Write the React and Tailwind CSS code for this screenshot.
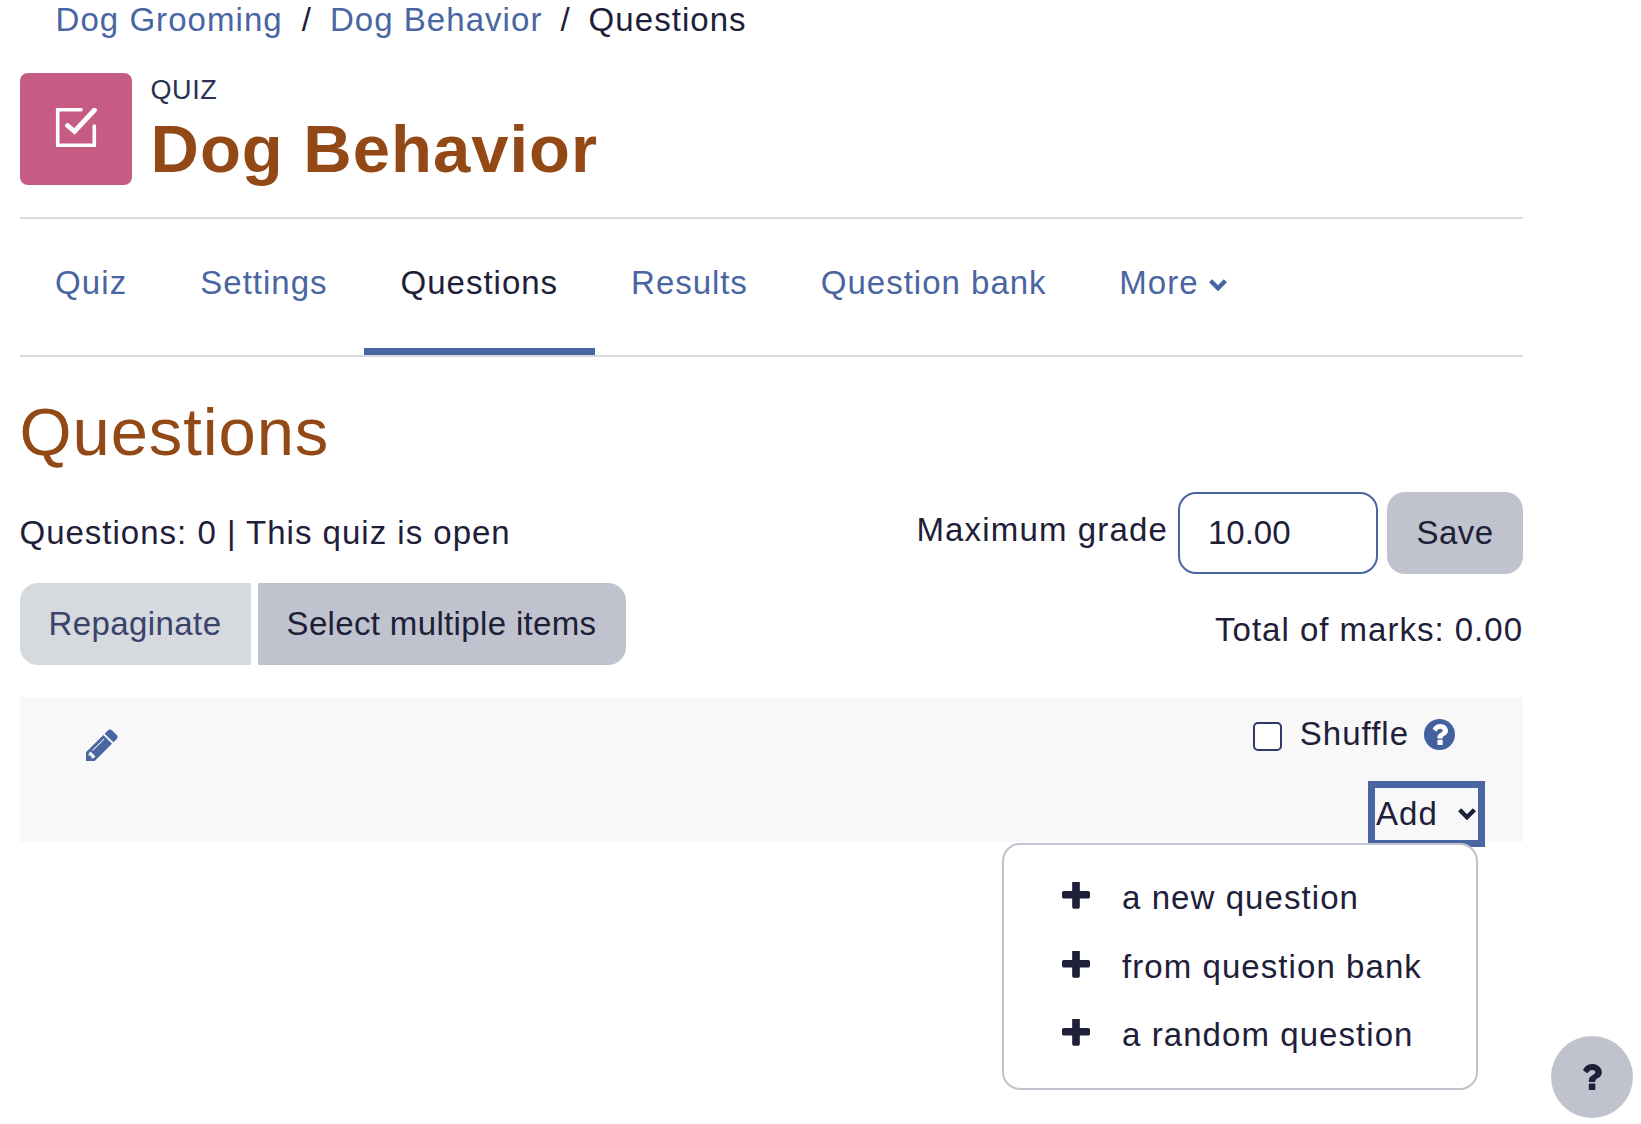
const PLUS =
  "M1600 736v192q0 40-28 68t-68 28h-416v416q0 40-28 68t-68 28h-192q-40 0-68-28t-28-68v-416h-416q-40 0-68-28t-28-68v-192q0-40 28-68t68-28h416v-416q0-40 28-68t68-28h192q40 0 68 28t28 68v416h416q40 0 68 28t28 68z";
const PENCIL =
  "M491 1536l91-91-235-235-91 91v107h128v128h107zm523-928q0-22-22-22-10 0-17 7l-542 542q-7 7-7 17 0 22 22 22 10 0 17-7l542-542q7-7 7-17zm-54-192l416 416-832 832h-416v-416zm683 96q0 53-37 90l-166 166-416-416 166-165q36-38 90-38 53 0 91 38l235 234q37 39 37 91z";
const QUESTION =
  "M1024 1376v-192q0-14-9-23t-23-9h-192q-14 0-23 9t-9 23v192q0 14 9 23t23 9h192q14 0 23-9t9-23zm256-672q0-88-55.5-163t-138.5-116-170-41q-243 0-371 213-15 24 8 42l132 100q7 6 19 6 16 0 25-12 53-68 86-92 34-24 86-24 48 0 85.5 26t37.5 59q0 38-20 61t-68 45q-63 28-115.5 86.5t-52.5 125.5v36q0 14 9 23t23 9h192q14 0 23-9t9-23q0-19 21.5-49.5t54.5-49.5q32-18 49-28.5t46-35 44.5-48 28-60.5 12.5-81z";

function Chevron({ className }) {
  return (
    <svg viewBox="0 0 18 12" className={className} fill="none" stroke="currentColor" strokeWidth="4.4">
      <path d="M1.6 1.8 L9 9.2 L16.4 1.8" />
    </svg>
  );
}

function MenuItem({ children }) {
  return (
    <li className="flex h-[68.6px] items-center">
      <svg viewBox="192 192 1408 1408" className="mb-1 h-7 w-7 shrink-0" fill="currentColor">
        <path d={PLUS} />
      </svg>
      <span className="ml-[32px] tracking-[1.07px]">{children}</span>
    </li>
  );
}

export default function App() {
  return (
    <div className="relative h-[1124px] w-full overflow-hidden bg-white pl-[19.5px] font-['Liberation_Sans',Arial,sans-serif] text-[33px] leading-[40px] whitespace-nowrap text-[#1d2038]">
      <div className="w-[1503.5px]">
        <nav className="flex h-[40px] pl-[36px] text-[#4965a2]">
          <a className="tracking-[1.05px]">Dog Grooming</a>
          <span className="mx-[19px] text-[#1d2038]">/</span>
          <a className="tracking-[1.05px]">Dog Behavior</a>
          <span className="mr-[19px] ml-[18px] text-[#1d2038]">/</span>
          <span className="tracking-[1.05px] text-[#1d2038]">Questions</span>
        </nav>

        <header className="mt-[33px] flex h-[146px] border-b-2 border-[#d7dade]">
          <div className="flex h-[112px] w-[112.5px] items-center justify-center rounded-lg bg-[#c65b84]">
            <svg viewBox="0 0 42 42" className="h-[42px] w-[42px]" fill="none" stroke="white" strokeWidth="3.6" strokeLinecap="round">
              <path d="M26 1.7H2.7V37.300H39.300V18" />
              <path d="M12.500 17.500L19.500 23.500L39.500 2" strokeWidth="4.8" />
            </svg>
          </div>
          <div className="ml-[18.5px] pt-[1px]">
            <div className="h-[32px] text-[27px] leading-[32px] tracking-[0.6px] text-[#2b3152]">QUIZ</div>
            <h1 className="mt-[3px] text-[67px] leading-[80px] font-bold tracking-[1px] text-[#924916]">Dog Behavior</h1>
          </div>
        </header>

        <nav className="-ml-px flex h-[136px] text-[#4965a2]">
          <a className="px-[36.5px] pt-[44px] tracking-[1.1px]">Quiz</a>
          <a className="px-[36.5px] pt-[44px] tracking-[1px]">Settings</a>
          <a className="border-b-[7px] border-[#4965a2] px-[36.5px] pt-[44px] tracking-[1px] text-[#1d2038]">Questions</a>
          <a className="px-[36.5px] pt-[44px] tracking-[0.95px]">Results</a>
          <a className="px-[36.5px] pt-[44px] tracking-[1px]">Question bank</a>
          <a className="flex px-[36px] pt-[44px] tracking-[1.1px]">
            More
            <Chevron className="mt-[16px] ml-[10px] h-3 w-[18px]" />
          </a>
        </nav>
        <hr className="border-t-2 border-[#d7dade]" />

        <h2 className="mt-[35px] h-[80px] text-[67px] leading-[80px] tracking-[0.9px] text-[#924916]">Questions</h2>

        <section className="mt-[20px] flex justify-between">
          <div>
            <div className="mt-[21px] tracking-[1px]">Questions: 0 | This quiz is open</div>
            <div className="mt-[30px] flex gap-[7px]">
              <button className="h-[82px] w-[231px] rounded-l-[18px] bg-[#d6d9de] text-[#39436b]">
                <span className="tracking-[0.4px]">Repaginate</span>
              </button>
              <button className="h-[82px] w-[368px] rounded-r-[18px] bg-[#c0c3cd]">
                <span className="tracking-[0.35px]">Select multiple items</span>
              </button>
            </div>
          </div>
          <div className="flex flex-col items-end">
            <div className="flex">
              <label className="mt-[18px] mr-[10px] tracking-[1.15px]">Maximum grade</label>
              <div className="flex h-[82px] w-[200px] items-center rounded-[18px] border-2 border-[#4965a2] pb-px pl-[28px]">10.00</div>
              <button className="ml-[9px] h-[82px] w-[136px] rounded-[18px] bg-[#c0c3cd]">
                <span className="tracking-[0.5px]">Save</span>
              </button>
            </div>
            <div className="mt-[36px] tracking-[1px]">Total of marks: 0.00</div>
          </div>
        </section>

        <section className="mt-[32px] flex h-[145px] justify-between bg-[#f8f8f8] pl-[66.5px]">
          <svg viewBox="128 128 1536 1536" className="mt-[32px] h-[32px] w-[32px] text-[#4965a2]" fill="currentColor">
            <path d={PENCIL} />
          </svg>
          <div className="flex flex-col items-end">
            <div className="mt-[17px] mr-[68px] flex h-[44px]">
              <span className="mt-[8px] h-[29px] w-[29px] rounded-[5px] border-2 border-[#2d3a68] bg-white" />
              <span className="ml-[18px] tracking-[1px]">Shuffle</span>
              <span className="mt-[5px] ml-[15px] flex h-[31px] w-[31px] items-center justify-center rounded-full bg-[#43609f]">
                <svg viewBox="506 384 774 1024" className="h-[21px] w-[16px]" fill="white">
                  <path d={QUESTION} />
                </svg>
              </span>
            </div>
            <div className="relative mt-[27px] mr-[38px]">
              <button className="flex h-[66px] w-[117px] justify-between border-[7px] border-[#4965a2] pr-[2px] pl-px">
                <span className="mt-[6px] tracking-[1.1px]">Add</span>
                <Chevron className="mt-[20px] h-3 w-[18px]" />
              </button>
              <ul className="absolute top-[62px] right-[7px] h-[247px] w-[476px] rounded-[18px] border-2 border-[#c0c3cd] bg-white pt-[19px] pl-[58px]">
                <MenuItem>a new question</MenuItem>
                <MenuItem>from question bank</MenuItem>
                <MenuItem>a random question</MenuItem>
              </ul>
            </div>
          </div>
        </section>
      </div>

      <button className="absolute top-[1036px] left-[1551px] flex h-[82px] w-[82px] items-center justify-center rounded-full bg-[#c0c3cd]">
        <svg viewBox="506 384 774 1024" className="h-[26px] w-[20px]" fill="currentColor">
          <path d={QUESTION} />
        </svg>
      </button>
    </div>
  );
}
